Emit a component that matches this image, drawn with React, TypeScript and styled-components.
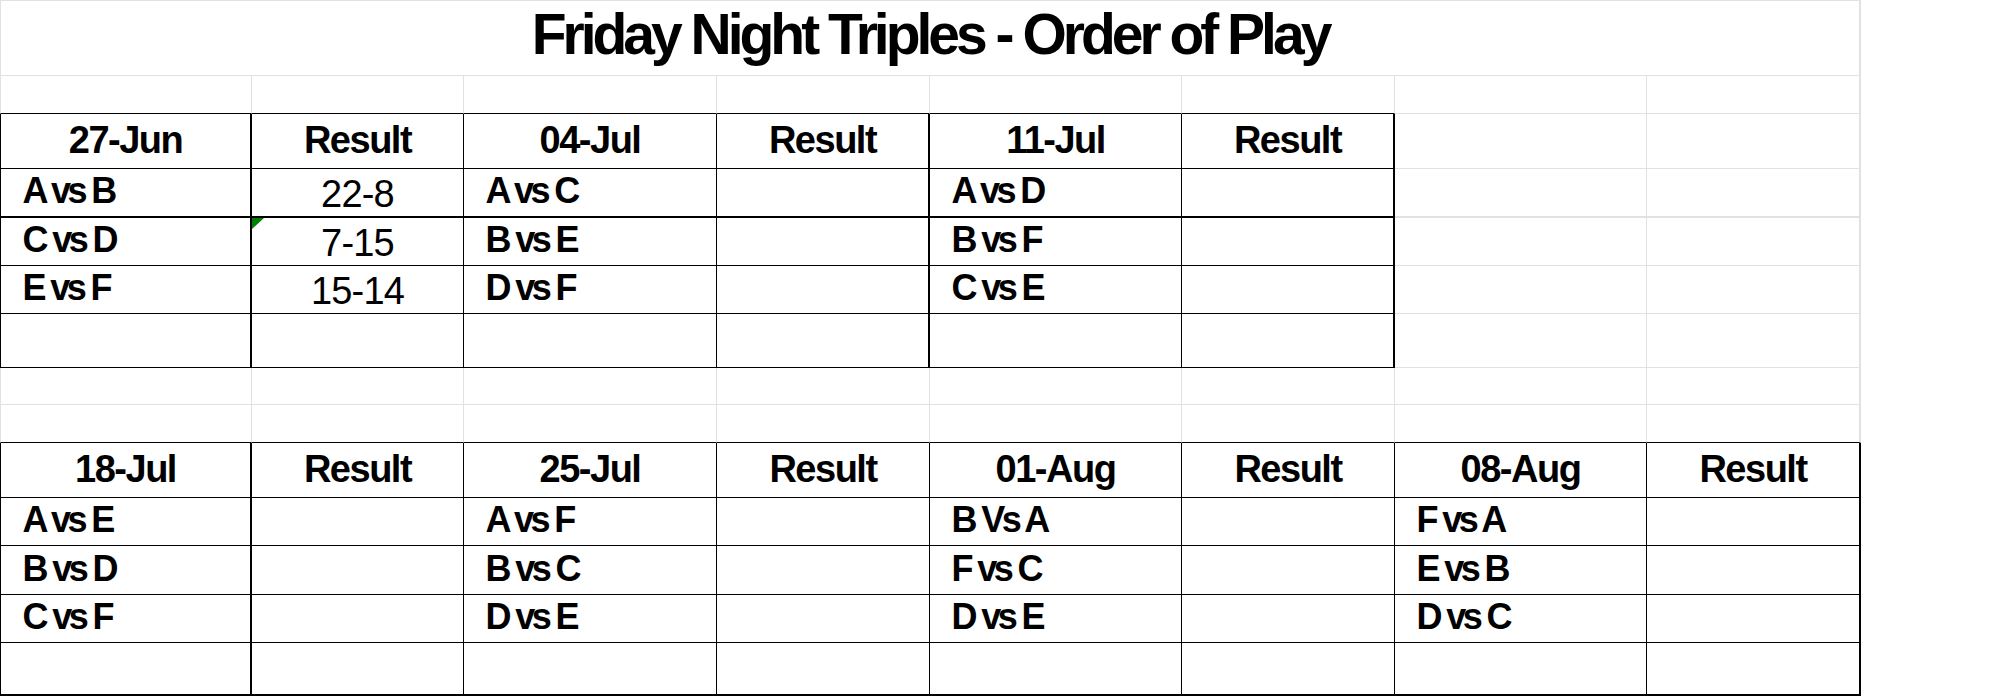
import React from 'react';
import styled, { createGlobalStyle } from 'styled-components';

const GRID = '#e1e1e1';
const INK = '#000000';

type Edge = { w: number; c: string };
const g = (w = 1): Edge => ({ w, c: GRID });
const k = (w = 1): Edge => ({ w, c: INK });
const edge = (e: Edge) => `${e.w}px solid ${e.c}`;

const GlobalStyle = createGlobalStyle`
  html, body { margin: 0; padding: 0; background: #ffffff; }
  body { font-family: "Liberation Sans", Arial, sans-serif; color: #000000; }
`;

const Sheet = styled.div`
  display: grid;
  width: max-content;
  grid-template-columns: 252px 212px 253px 213px 252px 213px 252px 214px;
  grid-template-rows: 75px 38px 55px 49px 48px 48px 54px 37px 38px 55px 48px 49px 48px 53px;
  border-top: 1px solid ${GRID};
`;

const Cell = styled.div<{ $r: Edge; $b: Edge; $l?: Edge }>`
  position: relative;
  box-sizing: border-box;
  display: flex;
  align-items: flex-end;
  min-width: 0;
  overflow: visible;
  white-space: nowrap;
  line-height: 1;
  border-right: ${(p) => edge(p.$r)};
  border-bottom: ${(p) => edge(p.$b)};
  border-left: ${(p) => (p.$l ? edge(p.$l) : 'none')};
`;

const TitleCell = styled(Cell)`
  grid-column: 1 / -1;
  justify-content: center;
  font-size: 57px;
  font-weight: 700;
  letter-spacing: -4px;
  padding-bottom: 12px;
`;

const HeadCell = styled(Cell)`
  justify-content: center;
  font-size: 38px;
  font-weight: 700;
  letter-spacing: -1.5px;
  padding-bottom: 9.5px;
`;

const NameCell = styled(Cell)`
  justify-content: flex-start;
  padding-left: 21.5px;
  font-size: 36px;
  font-weight: 700;
  letter-spacing: -3.6px;
  word-spacing: 1px;
  padding-bottom: 7px;
`;

const ScoreCell = styled(Cell)`
  justify-content: center;
  font-size: 38px;
  font-weight: 400;
  letter-spacing: -0.8px;
  padding-bottom: 3.5px;
`;

const CommentMark = styled.span`
  position: absolute;
  top: 0;
  left: 0;
  width: 0;
  height: 0;
  border-top: 11px solid #008000;
  border-right: 12px solid transparent;
`;

type Week = { date: string; games: string[]; results?: string[]; comment?: number };

const topWeeks: Week[] = [
  { date: '27-Jun', games: ['A vs B', 'C vs D', 'E vs F'], results: ['22-8', '7-15', '15-14'], comment: 1 },
  { date: '04-Jul', games: ['A vs C', 'B vs E', 'D vs F'] },
  { date: '11-Jul', games: ['A vs D', 'B vs F', 'C vs E'] },
];

const bottomWeeks: Week[] = [
  { date: '18-Jul', games: ['A vs E', 'B vs D', 'C vs F'] },
  { date: '25-Jul', games: ['A vs F', 'B vs C', 'D vs E'] },
  { date: '01-Aug', games: ['B Vs A', 'F vs C', 'D vs E'] },
  { date: '08-Aug', games: ['F vs A', 'E vs B', 'D vs C'] },
];

const COLS = 8;

// row indices: 0 title, 1 spacer, 2 header, 3-6 data, 7-8 spacers, 9 header, 10-13 data
const inTop = (r: number) => r >= 2 && r <= 6;
const inBottom = (r: number) => r >= 9 && r <= 13;

function rightEdge(r: number, c: number): Edge {
  if (inTop(r)) {
    if (c <= 5) return k(c === 0 || c === 3 || c === 5 ? 2 : 1);
    return c === 7 ? g(2) : g(1);
  }
  if (inBottom(r)) return k(c === 0 || c === 7 ? 2 : 1);
  return c === 7 ? g(2) : g(1);
}

function bottomEdge(r: number, c: number): Edge {
  if (r === 1 || r === 2 || (r >= 4 && r <= 6)) return c <= 5 ? k(1) : g(1);
  if (r === 3) return c <= 5 ? k(2) : g(2);
  if (r === 8 || (r >= 9 && r <= 12)) return k(1);
  if (r === 13) return k(2);
  return g(1);
}

function leftEdge(r: number, c: number): Edge | undefined {
  if (c !== 0) return undefined;
  return inTop(r) || inBottom(r) ? k(1) : g(1);
}

function renderCell(r: number, c: number) {
  const props = { $r: rightEdge(r, c), $b: bottomEdge(r, c), $l: leftEdge(r, c) };
  const key = `${r}-${c}`;
  const section = inTop(r) ? topWeeks : inBottom(r) ? bottomWeeks : null;
  const week = section ? section[Math.floor(c / 2)] : undefined;
  if (!week) return <Cell key={key} {...props} />;
  const isResult = c % 2 === 1;
  const headerRow = inTop(r) ? 2 : 9;
  if (r === headerRow) {
    return (
      <HeadCell key={key} {...props}>
        {isResult ? 'Result' : week.date}
      </HeadCell>
    );
  }
  const i = r - headerRow - 1;
  if (i > 2) return <Cell key={key} {...props} />;
  if (!isResult) {
    return (
      <NameCell key={key} {...props}>
        {week.games[i]}
      </NameCell>
    );
  }
  const score = week.results?.[i];
  if (!score) return <Cell key={key} {...props} />;
  return (
    <ScoreCell key={key} {...props}>
      {week.comment === i && <CommentMark />}
      {score}
    </ScoreCell>
  );
}

export default function App() {
  const rows: React.ReactNode[] = [];
  for (let r = 1; r <= 13; r++) {
    for (let c = 0; c < COLS; c++) rows.push(renderCell(r, c));
  }
  return (
    <>
      <GlobalStyle />
      <Sheet>
        <TitleCell $r={g(2)} $b={g(1)} $l={g(1)}>
          Friday Night Triples - Order of Play
        </TitleCell>
        {rows}
      </Sheet>
    </>
  );
}
